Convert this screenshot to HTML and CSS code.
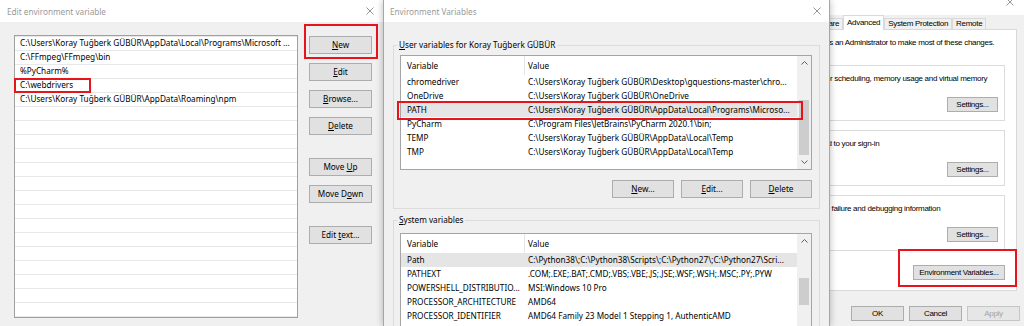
FILE: index.html
```html
<!DOCTYPE html>
<html lang="en">
<head>
    <meta charset="UTF-8">
    <meta name="viewport" content="width=device-width, initial-scale=1.0">
    <title>Environment Variables</title>
    <link rel="stylesheet" href="styles.css">
</head>
<body>
    <div class="desktop">
        <!-- Edit environment variable -->
        <section class="window edit-window">
            <div class="titlebar">
                <span class="title">Edit environment variable</span>
                <svg class="close" viewBox="0 0 8 8"><path d="M0.5 0.5L7.5 7.5M7.5 0.5L0.5 7.5"/></svg>
            </div>
            <div class="edit-body">
                <div class="path-list">
                    <div class="path-row">C:\Users\Koray Tuğberk GÜBÜR\AppData\Local\Programs\Microsoft ...</div>
                    <div class="path-row">C:\FFmpeg\FFmpeg\bin</div>
                    <div class="path-row">%PyCharm%</div>
                    <div class="path-row">C:\webdrivers</div>
                    <div class="path-row">C:\Users\Koray Tuğberk GÜBÜR\AppData\Roaming\npm</div>
                    <div class="callout callout-webdrivers"></div>
                </div>
                <div class="edit-actions">
                    <button class="btn"><u>N</u>ew</button>
                    <button class="btn"><u>E</u>dit</button>
                    <button class="btn"><u>B</u>rowse...</button>
                    <button class="btn"><u>D</u>elete</button>
                    <button class="btn spaced">Move <u>U</u>p</button>
                    <button class="btn">Move D<u>o</u>wn</button>
                    <button class="btn spaced">Edit <u>t</u>ext...</button>
                    <div class="callout callout-new"></div>
                </div>
            </div>
        </section>

        <!-- Environment Variables -->
        <section class="window env-window">
            <div class="titlebar">
                <span class="title">Environment Variables</span>
                <svg class="close" viewBox="0 0 8 8"><path d="M0.5 0.5L7.5 7.5M7.5 0.5L0.5 7.5"/></svg>
            </div>
            <div class="env-body">
                <fieldset class="group user-group">
                    <legend><u>U</u>ser variables for Koray Tuğberk GÜBÜR</legend>
                    <div class="listview">
                        <div class="lv-main">
                            <div class="lv-head"><span class="c1">Variable</span><span class="c2">Value</span></div>
                            <div class="lv-row"><span class="c1">chromedriver</span><span class="c2">C:\Users\Koray Tuğberk GÜBÜR\Desktop\gquestions-master\chro...</span></div>
                            <div class="lv-row"><span class="c1">OneDrive</span><span class="c2">C:\Users\Koray Tuğberk GÜBÜR\OneDrive</span></div>
                            <div class="lv-row selected"><span class="c1">PATH</span><span class="c2">C:\Users\Koray Tuğberk GÜBÜR\AppData\Local\Programs\Microso...</span></div>
                            <div class="lv-row"><span class="c1">PyCharm</span><span class="c2">C:\Program Files\JetBrains\PyCharm 2020.1\bin;</span></div>
                            <div class="lv-row"><span class="c1">TEMP</span><span class="c2">C:\Users\Koray Tuğberk GÜBÜR\AppData\Local\Temp</span></div>
                            <div class="lv-row"><span class="c1">TMP</span><span class="c2">C:\Users\Koray Tuğberk GÜBÜR\AppData\Local\Temp</span></div>
                        </div>
                        <div class="scrollbar">
                            <div class="sb-arrow"><svg viewBox="0 0 7 4"><polyline points="0.5,3.5 3.5,0.5 6.5,3.5"/></svg></div>
                            <div class="sb-track"><div class="sb-thumb user-thumb"></div></div>
                            <div class="sb-arrow"><svg viewBox="0 0 7 4"><polyline points="0.5,0.5 3.5,3.5 6.5,0.5"/></svg></div>
                        </div>
                        <div class="callout callout-path"></div>
                    </div>
                    <div class="group-actions">
                        <button class="btn"><u>N</u>ew...</button>
                        <button class="btn"><u>E</u>dit...</button>
                        <button class="btn"><u>D</u>elete</button>
                    </div>
                </fieldset>

                <fieldset class="group system-group">
                    <legend><u>S</u>ystem variables</legend>
                    <div class="listview">
                        <div class="lv-main">
                            <div class="lv-head"><span class="c1">Variable</span><span class="c2">Value</span></div>
                            <div class="lv-row selected"><span class="c1">Path</span><span class="c2">C:\Python38\;C:\Python38\Scripts\;C:\Python27\;C:\Python27\Scri...</span></div>
                            <div class="lv-row"><span class="c1">PATHEXT</span><span class="c2">.COM;.EXE;.BAT;.CMD;.VBS;.VBE;.JS;.JSE;.WSF;.WSH;.MSC;.PY;.PYW</span></div>
                            <div class="lv-row"><span class="c1">POWERSHELL_DISTRIBUTIO...</span><span class="c2">MSI:Windows 10 Pro</span></div>
                            <div class="lv-row"><span class="c1">PROCESSOR_ARCHITECTURE</span><span class="c2">AMD64</span></div>
                            <div class="lv-row"><span class="c1">PROCESSOR_IDENTIFIER</span><span class="c2">AMD64 Family 23 Model 1 Stepping 1, AuthenticAMD</span></div>
                            <div class="lv-row"><span class="c1">PROCESSOR_LEVEL</span><span class="c2">23</span></div>
                        </div>
                        <div class="scrollbar">
                            <div class="sb-arrow"><svg viewBox="0 0 7 4"><polyline points="0.5,3.5 3.5,0.5 6.5,3.5"/></svg></div>
                            <div class="sb-track"><div class="sb-thumb system-thumb"></div></div>
                            <div class="sb-arrow"><svg viewBox="0 0 7 4"><polyline points="0.5,0.5 3.5,3.5 6.5,0.5"/></svg></div>
                        </div>
                    </div>
                </fieldset>
            </div>
        </section>

        <!-- System Properties (partly hidden) -->
        <section class="window sys-window">
            <div class="sys-frame">
                <div class="sys-titlebar">
                    <svg class="close" viewBox="0 0 8 8"><path d="M0.5 0.5L7.5 7.5M7.5 0.5L0.5 7.5"/></svg>
                </div>
                <div class="tabs">
                    <span class="tab">Computer Name</span>
                    <span class="tab">Hardware</span>
                    <span class="tab active">Advanced</span>
                    <span class="tab">System Protection</span>
                    <span class="tab">Remote</span>
                </div>
                <div class="tab-panel">
                    <p class="note">You must be logged on as an Administrator to make most of these changes.</p>
                    <fieldset class="sys-group">
                        <legend>Performance</legend>
                        <p>Visual effects, processor scheduling, memory usage and virtual memory</p>
                        <button class="btn">Settings...</button>
                    </fieldset>
                    <fieldset class="sys-group">
                        <legend>User Profiles</legend>
                        <p>Desktop settings related to your sign-in</p>
                        <button class="btn">Settings...</button>
                    </fieldset>
                    <fieldset class="sys-group">
                        <legend>Startup and Recovery</legend>
                        <p>System startup, system failure and debugging information</p>
                        <button class="btn">Settings...</button>
                    </fieldset>
                    <div class="env-vars-row">
                        <button class="btn">Environment Variables...</button>
                        <div class="callout callout-envvars"></div>
                    </div>
                </div>
                <div class="dialog-actions">
                    <button class="btn">OK</button>
                    <button class="btn">Cancel</button>
                    <button class="btn" disabled>Apply</button>
                </div>
            </div>
        </section>
    </div>
</body>
</html>
```

FILE: styles.css
```css
* {
    margin: 0;
    padding: 0;
    box-sizing: border-box;
}

body {
    width: 1024px;
    height: 326px;
    overflow: hidden;
    background: #f0f0f0;
    font-family: 'Segoe UI', 'Noto Sans', sans-serif;
    font-size: 8.2px;
    color: #000;
}

.desktop {
    display: flex;
    height: 326px;
}

.window {
    flex-shrink: 0;
    height: 326px;
    background: #f0f0f0;
}

.titlebar {
    height: 22px;
    display: flex;
    align-items: center;
    justify-content: space-between;
    background: #fff;
    color: #999;
    white-space: nowrap;
}

.close {
    width: 8px;
    height: 8px;
    fill: none;
    stroke: #8a8a8a;
    stroke-width: 0.9;
}

.btn {
    display: block;
    height: 18px;
    padding: 0;
    background: #e1e1e1;
    border: 1px solid #adadad;
    font: inherit;
    letter-spacing: inherit;
    line-height: 16px;
    color: #000;
    text-align: center;
    white-space: nowrap;
}

.btn:disabled {
    background: #e6e6e6;
    border-color: #c6c6c6;
    color: #a3a3a3;
}

u {
    text-underline-offset: 1px;
}

.callout {
    position: absolute;
    border: 2px solid #e8141c;
    pointer-events: none;
}

/* Edit environment variable */
.edit-window {
    width: 383px;
}

.edit-window .titlebar {
    padding: 0 9px 0 7px;
}

.edit-body {
    display: flex;
    gap: 11px;
    padding: 13px 0 0 14px;
}

.path-list {
    position: relative;
    width: 284px;
    height: 283px;
    border: 1px solid #a0a0a0;
    background: repeating-linear-gradient(to bottom, #e8e8e8 0, #e8e8e8 1px, #fff 1px, #fff 14px);
}

.path-row {
    height: 14px;
    line-height: 14px;
    padding-left: 5px;
    white-space: nowrap;
    overflow: hidden;
}

.edit-actions {
    position: relative;
    width: 63px;
    padding-top: 1px;
    display: flex;
    flex-direction: column;
    gap: 9px;
}

.edit-actions .spaced {
    margin-top: 14px;
}

.callout-webdrivers {
    left: -1px;
    top: 42px;
    width: 77px;
    height: 15px;
}

.callout-new {
    left: -5px;
    top: -11px;
    width: 74px;
    height: 35px;
}

/* Environment Variables */
.env-window {
    position: relative;
    z-index: 1;
    width: 447px;
    border-left: 1px solid #a6a6a6;
    border-right: 1px solid #a6a6a6;
    box-shadow: 0 0 7px rgba(0, 0, 0, 0.28);
}

.env-window .titlebar {
    padding: 0 8px 0 6px;
}

.env-body {
    padding: 16px 9px 0;
}

.group {
    min-width: 0;
    border: 1px solid #dcdcdc;
    padding: 3px 7px 10px 6px;
}

.group legend {
    margin-left: -3px;
    padding: 0 2px;
    line-height: 14px;
}

.system-group {
    margin-top: 4px;
    padding-top: 6px;
}

.listview {
    position: relative;
    display: flex;
    height: 115px;
    background: #fff;
    border: 1px solid #a5a5a5;
}

.lv-main {
    flex: 1;
    min-width: 0;
    overflow: hidden;
}

.lv-head,
.lv-row {
    display: flex;
    white-space: nowrap;
}

.lv-head {
    height: 19px;
    line-height: 19px;
}

.lv-row {
    height: 14px;
    line-height: 14px;
}

.lv-row.selected {
    background: #e5e5e5;
}

.c1 {
    flex-shrink: 0;
    width: 124px;
    padding-left: 6px;
    overflow: hidden;
}

.lv-head .c1 {
    border-right: 1px solid #e5e5e5;
}

.c2 {
    flex: 1;
    min-width: 0;
    padding-left: 3px;
    overflow: hidden;
}

.scrollbar {
    width: 14px;
    flex-shrink: 0;
    display: flex;
    flex-direction: column;
    background: #f0f0f0;
}

.sb-arrow {
    height: 14px;
    display: flex;
    align-items: center;
    justify-content: center;
}

.sb-arrow svg {
    width: 7px;
    height: 4px;
    fill: none;
    stroke: #606060;
    stroke-width: 1;
}

.sb-track {
    flex: 1;
}

.sb-thumb {
    margin: 0 2px;
    background: #cdcdcd;
}

.user-thumb {
    margin-top: 30px;
    height: 55px;
}

.system-thumb {
    margin-top: 30px;
    height: 27px;
}

.callout-path {
    left: -4px;
    top: 45px;
    width: 406px;
    height: 19px;
}

.group-actions {
    display: flex;
    justify-content: flex-end;
    gap: 7px;
    margin-top: 10px;
}

.group-actions .btn {
    width: 62px;
}

/* System Properties */
.sys-window {
    flex: 1;
    min-width: 0;
    overflow: hidden;
    display: flex;
    justify-content: flex-end;
}

.sys-frame {
    flex-shrink: 0;
    width: 291px;
    font-family: 'Liberation Sans', Arial, sans-serif;
    font-size: 8px;
    letter-spacing: -0.3px;
}

.sys-titlebar {
    height: 15px;
    display: flex;
    justify-content: flex-end;
    padding-right: 10px;
    background: #fff;
}

.sys-titlebar .close {
    margin-top: -2px;
}

.tabs {
    display: flex;
    align-items: flex-end;
    height: 14px;
    margin: 0 7px;
}

.tab {
    height: 11px;
    line-height: 10px;
    padding: 0 3px;
    background: #f0f0f0;
    border: 1px solid #d9d9d9;
    border-bottom: none;
    white-space: nowrap;
}

.tab.active {
    position: relative;
    z-index: 1;
    height: 15px;
    margin-bottom: -1px;
    line-height: 13px;
    background: #fff;
}

.tab-panel {
    height: 262px;
    margin: 0 7px;
    padding: 8px 11px 0 0;
    background: #fff;
    border: 1px solid #d9d9d9;
}

.note {
    margin-left: 7px;
    line-height: 10px;
    white-space: nowrap;
}

.sys-group {
    min-width: 0;
    margin: 12px 0 0 5px;
    padding: 4px 6px 8px;
    border: 1px solid #dcdcdc;
}

.sys-group + .sys-group {
    margin-top: 4px;
}

.sys-group legend {
    padding: 0 2px;
    line-height: 10px;
}

.sys-group p {
    line-height: 10px;
    white-space: nowrap;
}

.sys-group .btn,
.env-vars-row .btn,
.dialog-actions .btn {
    height: 15px;
    line-height: 13px;
}

.sys-group .btn {
    width: 51px;
    margin: 13px 0 0 auto;
}

.env-vars-row {
    position: relative;
    display: flex;
    justify-content: flex-end;
    margin-top: 14px;
}

.env-vars-row .btn {
    width: 92px;
}

.callout-envvars {
    right: -12px;
    top: -16px;
    width: 119px;
    height: 38px;
}

.dialog-actions {
    display: flex;
    justify-content: flex-end;
    gap: 5px;
    margin: 15px 4px 0 0;
}

.dialog-actions .btn {
    width: 53px;
}
```
